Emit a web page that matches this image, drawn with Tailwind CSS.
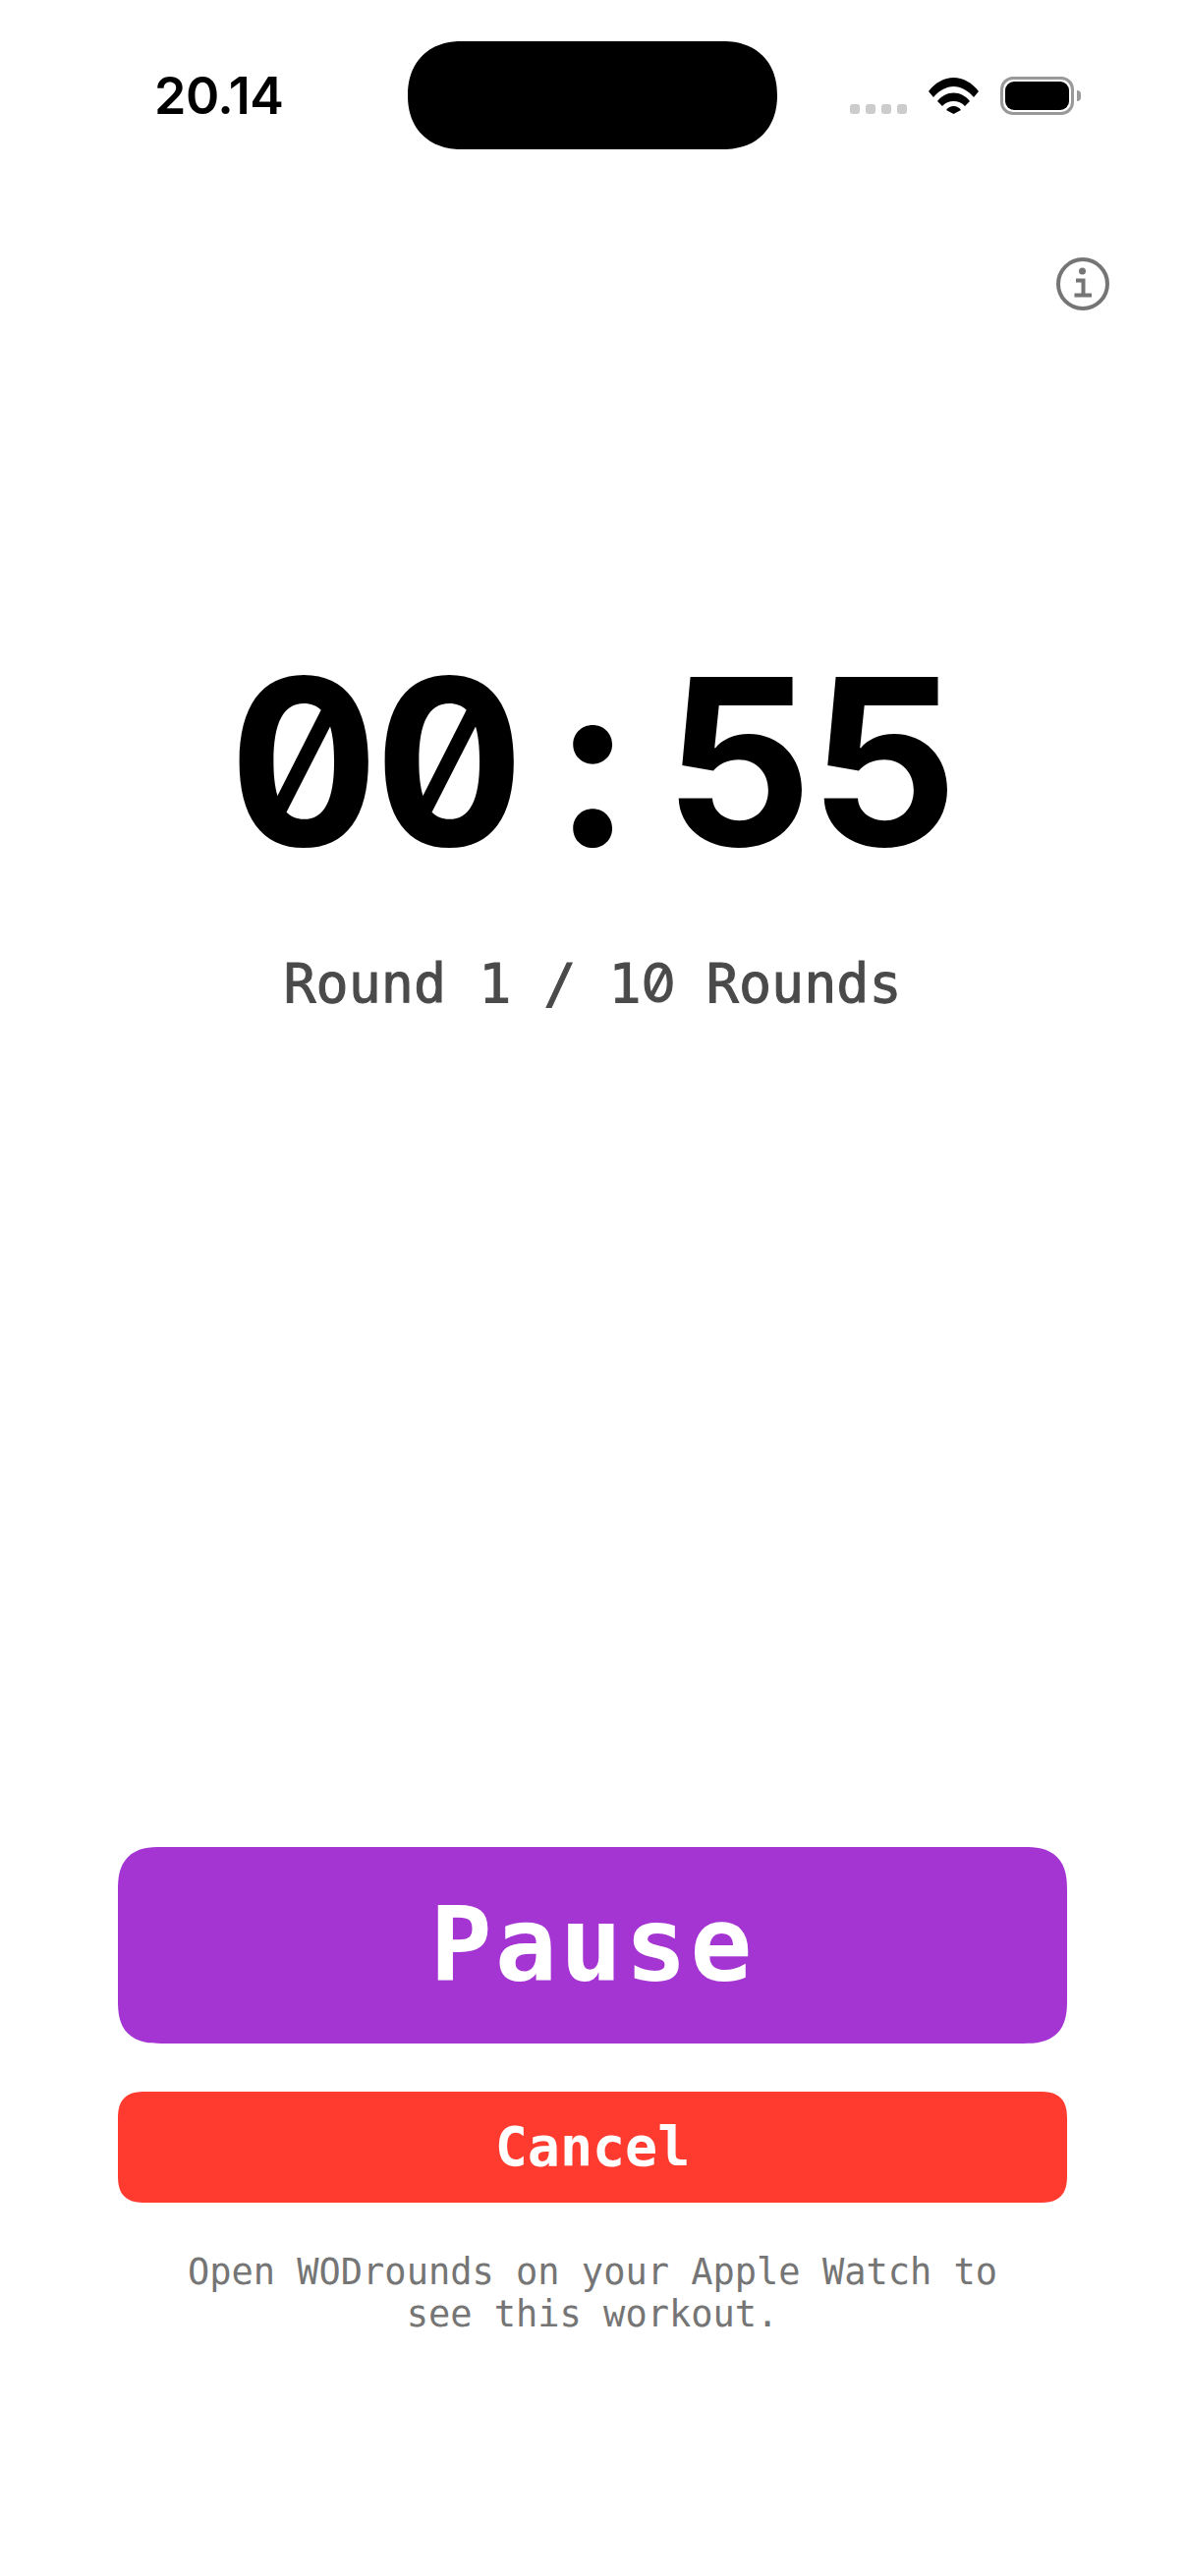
<!DOCTYPE html>
<html lang="en">
<head>
    <meta charset="UTF-8">
    <meta name="viewport" content="width=device-width, initial-scale=1.0">
    <title>WODrounds</title>
    <script src="https://cdn.jsdelivr.net/npm/@tailwindcss/browser@4"></script>
</head>
<body class="bg-white">
    <div class="w-[1206px] h-[2622px] flex flex-col font-['DejaVu_Sans_Mono',monospace] overflow-hidden">
        <!-- status bar -->
        <div class="flex items-start h-[152px] pt-[42px]">
            <span class="ml-[157px] w-[258px] mt-[28px] text-[52px] leading-[56px] font-semibold text-black tracking-[-0.5px] font-['Inter',sans-serif]">20.14</span>
            <div class="w-[376px] h-[110px] rounded-[55px] [corner-shape:superellipse(1.15)] bg-black"></div>
            <div class="ml-[74px] mt-[64px] flex gap-[6px]">
                <span class="w-[10px] h-[10px] rounded-[3px] bg-[#cccccc]"></span>
                <span class="w-[10px] h-[10px] rounded-[3px] bg-[#cccccc]"></span>
                <span class="w-[10px] h-[10px] rounded-[3px] bg-[#cccccc]"></span>
                <span class="w-[10px] h-[10px] rounded-[3px] bg-[#cccccc]"></span>
            </div>
            <svg class="ml-[22px] mt-[37px]" width="51" height="37" viewBox="0 0 51 37" fill="#000">
                <path d="M0 14C7 5 16 0 25.500 0S44 5 51 14L46 20C40 13 33 9 25.500 9S11 13 5 20Z"/>
                <path d="M9 24C13.500 18.500 19 15.500 25.500 15.500S37.500 18.500 42 24L37 29C34 25.800 30 24 25.500 24S17 25.800 14 29Z"/>
                <path d="M18 33C20 30.500 22.500 29 25.500 29S31 30.500 33 33L25.500 37Z"/>
            </svg>
            <div class="ml-[22px] mt-[36px] flex items-center">
                <div class="w-[75px] h-[39px] rounded-[13px] border-[3px] border-[#999999] p-[2px]">
                    <div class="w-full h-full rounded-[9px] bg-black"></div>
                </div>
                <div class="ml-[3px] w-[4px] h-[11px] rounded-r-[4px] bg-[#999999]"></div>
            </div>
        </div>

        <!-- info button -->
        <div class="flex justify-end pr-[77px] pt-[110px]">
            <svg width="54" height="54" viewBox="0 0 54 54" fill="none" stroke="#757575" stroke-width="4">
                <circle cx="27" cy="27" r="25"/>
                <circle cx="26.500" cy="14" r="3.500" fill="#757575" stroke="none"/>
                <path d="M20 23.500H27.500V38M18.500 38.500H36"/>
            </svg>
        </div>

        <!-- timer -->
        <div class="mt-[329px] flex justify-center text-[236px] leading-[260px] font-bold text-black font-['Inter',sans-serif] slashed-zero tabular-nums">
            <span class="w-[148px] text-center">0</span>
            <span class="w-[148px] text-center">0</span>
            <span class="w-[148px] text-center">:</span>
            <span class="w-[148px] text-center">5</span>
            <span class="w-[148px] text-center">5</span>
        </div>
        <div class="mt-[62px] text-center text-[55px] leading-[66px] text-[#4a4a4a] [-webkit-text-stroke:1px_#4a4a4a]">Round 1 / 1<span class="inline-block w-[33px] text-center font-['Inter',sans-serif] slashed-zero">0</span> Rounds</div>

        <!-- buttons -->
        <div class="mt-auto mx-[120px] flex flex-col items-stretch">
            <div class="h-[200px] rounded-[44px] [corner-shape:superellipse(1.4)] bg-[#a435d3] flex items-center justify-center text-[105px] leading-none font-bold text-white tracking-[3px]">Pause</div>
            <div class="mt-[49px] h-[113px] rounded-[28px] [corner-shape:superellipse(1.4)] bg-[#ff3b30] flex items-center justify-center text-[55px] leading-none font-bold text-white">Cancel</div>
            <p class="mt-[49px] text-center text-[37px] leading-[43px] text-[#757575]">Open WODrounds on your Apple Watch to<br>see this workout.</p>
        </div>
        <div class="h-[245px]"></div>
    </div>
</body>
</html>
